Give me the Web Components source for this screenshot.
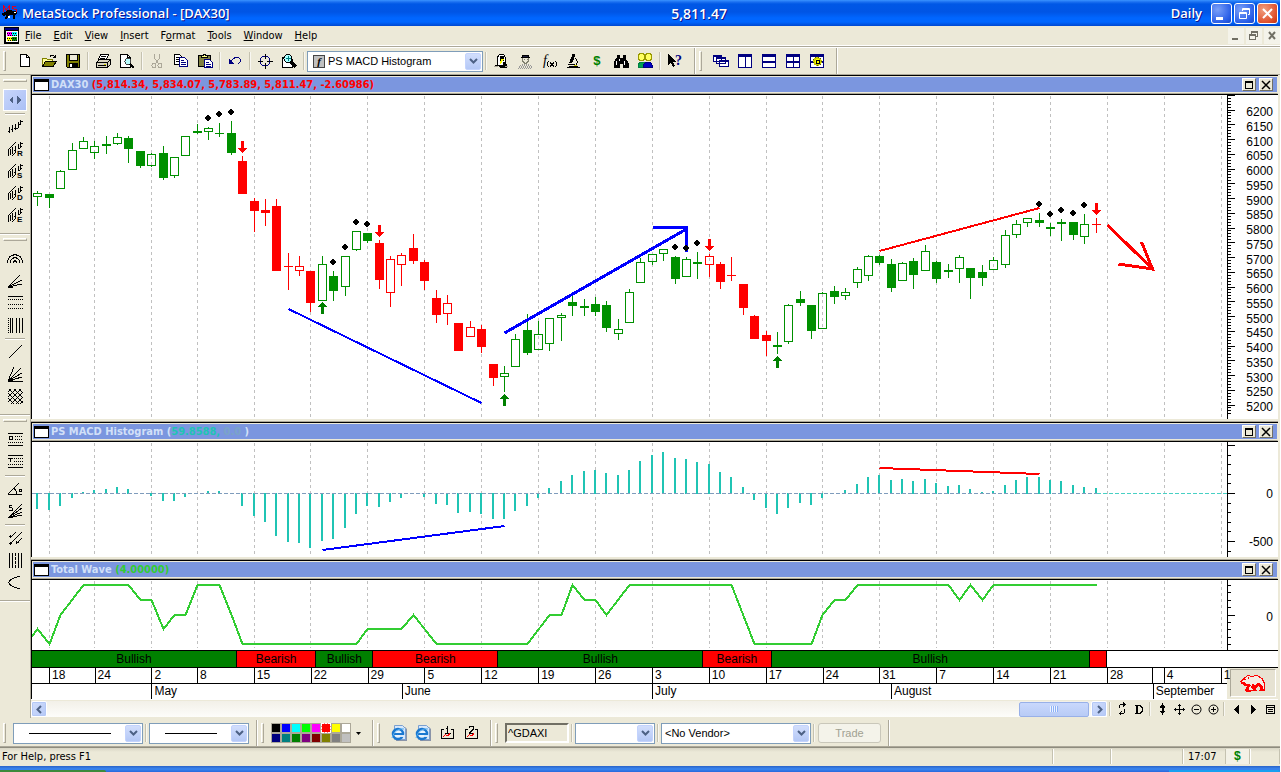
<!DOCTYPE html>
<html lang="en">
<head>
<meta charset="utf-8">
<title>MetaStock Professional - [DAX30]</title>
<style>
  body {
    margin: 0;
    background: #fff;
    font-family: "DejaVu Sans Condensed", "Noto Sans", sans-serif;
    font-size: 11px;
    color: #000;
  }
</style>
</head>
<body>
<ms-app></ms-app>

<script>
// 16x16 icons, drawn on the pixel grid
const bars = '<path d="M2.5 8v6M1 12.5h2M5.5 6v7M4 10.5h1M8.5 5v6M7 9.5h4M11.5 3v6M13.5 1v5M12 5.5h2M14 2.5h2"/>';
const channel = (letter) => `<path d="M1 9 9 1M5 15 15 5M1.5 9v6M3.5 8v6M5.5 6v7M8.5 5v6M7 9.5h4M11.5 3v6M13.5 1v5M14 2.5h2"/>
  <rect x="9" y="8" width="7" height="8" fill="#ece9d8" stroke="none"/>
  <text x="10" y="15" font-family="Liberation Sans, sans-serif" font-size="8" font-weight="bold" fill="#000" stroke="none">${letter}</text>`;

const ICONS = {
  new: '<path fill="#fff" d="M3.5 1.5h6l3 3v9h-9z"/><path d="M9.5 1.5v3h3"/>',
  open: '<path fill="#ff9" stroke="#808000" d="M1.5 13V5.5h4l1 1h5V9"/><path fill="#808000" d="M1.5 13.5 4.5 8.5h11l-3.5 5z"/><path d="M9 3.5c2-2 4-1 5 1M14.5 2v3M12 4.5h2"/>',
  save: '<path fill="#808000" d="M1.5 1.5h13v13h-12l-1-1z"/><path fill="#ece9d8" d="M4.5 1.5h8v6h-8z"/><path fill="#000" d="M4.5 10.5h8v4h-8z"/><path stroke="#fff" stroke-width="2" d="M6 11v3"/>',
  print: '<path fill="#fff" d="M5.5 1.5h8l-2 5h-8z"/><path d="M6 3.5h5M5 5.5h5"/><path fill="#d8d4c0" d="M1.5 9.5l3-3h11v5l-3 3h-11z"/><path d="M1 9.5h11.5v5M12.5 9.5l3-3M3 12.5h8"/><path stroke="#cc0" d="M9 11.5h2"/>',
  preview: '<path fill="#fff" d="M1.5 1.5h7l3 3v10h-10z"/><path d="M8.5 1.5v3h3"/><circle cx="9" cy="8.5" r="3" fill="#bff" stroke="#444"/><path stroke-width="2" d="M11 11l4 4"/>',
  cut: '<g stroke="#aca899"><path d="M5.5 1v4l4 6M10.5 1v4l-4 6"/><circle cx="5" cy="12.5" r="2"/><circle cx="11" cy="12.5" r="2"/></g>',
  copy: '<path fill="#fff" d="M1.5 1.5h5l3 3v7h-8z"/><path d="M3 4.5h3M3 6.5h4M3 8.5h4"/><path fill="#fff" stroke="#000080" d="M6.5 4.5h5l3 3v6h-8z"/><path stroke="#000080" d="M8 7.5h3M8 9.5h5M8 11.5h5"/>',
  paste: '<path fill="#808040" d="M1.5 2.5h12v11h-12z"/><path fill="#ff8" d="M4.5 4.5v-2h1.5l1-1.5h1l1 1.5h1.5v2z"/><path fill="#fff" stroke="#000080" d="M7.5 6.5h5l3 3v5h-8z"/><path stroke="#000080" d="M9 9.5h3M9 11.5h5M9 13.5h5"/>',
  undo: '<path stroke="#000080" d="M3 9l3-3c2-2 7-2 7.5 1 0 2-1 3-2 4"/><path stroke="none" fill="#000080" d="M2 6v5h5z"/>',
  cross: '<circle cx="8" cy="8" r="5" stroke="#000080"/><path d="M8.5 1v5M8.5 10v6M1 8.5h5M10 8.5h6"/>',
  zoomin: '<path fill="#fff" d="M1.5 4.5h8l2 2v8h-10z"/><circle cx="7" cy="5.5" r="4" fill="#aff"/><path stroke-width="3" d="M10 9l5 5"/><path stroke="#008080" d="M5 5.5h5M7.5 3v5"/>',
  lamp: '<path fill="#fff" d="M4.5 13V4l2-2.5h4l2 3v9"/><path fill="#000" d="M7 3h3v4H7zM2 12h3l2 2h6v-3l-2-2h-1v3H7z"/><path stroke="none" fill="#ff0" d="M8 6h3l-3 5H7z"/><path stroke="#aca899" d="M1 13.5h4M12 13.5h3"/>',
  expert: '<path fill="#224" d="M4 4.5h9M5.5 4V2.5h6V4z"/><path stroke="#808070" d="M5.5 5v3l2 2h2l2-2V5M7 6.5h1M10 6.5h1"/><path stroke="#999" stroke-dasharray="1 1" d="M2 13.5h13M3 12.5h11M5 11.5h7M1 15.5h14M2 14.5h13"/>',
  fx: '<text x="2" y="12" font-family="Liberation Serif, serif" font-style="italic" font-size="14" fill="#000" stroke="none">f</text><path d="M7.5 8l-1 2v2l1 2M14.5 8l1 2v2l-1 2M9 9.5l4 4M13 9.5l-4 4"/>',
  scope: '<path fill="#000" d="M8 1l2 1-3 7H5z"/><path d="M10 5c3 2 3 5 0 8M3 11.5h7M2 14.5h13M4 13.5h9"/><path stroke="#cc0" d="M9 12.5h3"/>',
  dollar: '<text x="8" y="12" text-anchor="middle" font-family="Liberation Mono, monospace" font-weight="bold" font-size="13" fill="#008000" stroke="none">$</text>',
  binoc: '<path fill="#000" d="M4 2h2v3h4V2h2v3l3 5v4h-5v-4H6v4H1v-4l3-5z"/><path stroke="#fff" d="M3.5 8v4M11.5 8v4M6.5 6v2"/>',
  people: '<circle cx="4.5" cy="4" r="3.5" fill="#ffff60" stroke="#990"/><circle cx="11.5" cy="4" r="3.5" fill="#ffff60" stroke="#990"/><path stroke="#008040" fill="#00a050" d="M1 14.5v-3l2-2h4v5z"/><path stroke="#000080" fill="#0000c0" d="M6.5 14.5v-3l2-2h5l2 3v2z"/>',
  help: '<path fill="#000" stroke="none" d="M1 1v11l3-2 2 4 2-1-2-4h4z"/><text x="8" y="12" font-family="Liberation Serif, serif" font-weight="bold" font-size="14" fill="#000080" stroke="none">?</text>',
  cascade: '<g stroke="#000080" fill="#fff"><path d="M.5 2.5h8v6h-8zM3.5 4.5h9v6h-9zM6.5 7.5h9v6h-9z"/><path stroke-width="2" d="M1 3h8M4 5h9M7 8h9"/></g>',
  columns: '<g stroke="#000080" fill="#fff"><path d="M1.5 1.5h13v13h-13zM8.5 2v13"/><path stroke-width="2" d="M1 3h14"/></g>',
  rows: '<g stroke="#000080" fill="#fff"><path d="M1.5 1.5h13v13h-13z"/><path stroke-width="2" d="M1 3h14M1 9h14"/></g>',
  tiles: '<g stroke="#000080" fill="#fff"><path d="M1.5 1.5h13v13h-13zM8.5 2v13"/><path stroke-width="2" d="M1 3h14M1 9h14"/></g>',
  gear: '<g stroke="#000080" fill="#fff"><path d="M1.5 1.5h13v13h-13z"/><path stroke-width="2" d="M1 3h14M1 9h14"/></g><circle cx="8.5" cy="8.5" r="3.5" fill="#ff0" stroke="#cc0" stroke-width="2"/><circle cx="8.5" cy="8.5" r="4.5" stroke="#550" stroke-dasharray="1 2"/><rect x="7" y="7" width="3" height="3"/>',

  split: '<path fill="#4d6185" stroke="none" d="M6 4v8L2 8zM10 4v8l4-4z"/>',
  bars,
  channelR: channel('R'),
  channelS: channel('S'),
  channelD: channel('D'),
  channelE: channel('E'),
  arcs: '<path d="M.5 12c0-11 15-11 15 0M3.5 12c0-7 9-7 9 0M6.5 12c0-3 3-3 3 0"/>',
  fan: '<path d="M1 14 13 2M1 14l14-7M1 14l14-3M1 14.5h5"/>',
  fibo: '<path d="M1 1.5h15"/><path stroke-dasharray="1 1" d="M1 4.5h15M1 9.5h15M1 13.5h15"/>',
  cycles: '<path stroke-dasharray="1 1" d="M1.5 1v15"/><path d="M3.5 1v15M5.5 1v15M9.5 1v15M12.5 1v15M15.5 1v15"/>',
  line: '<path d="M2 14 15 1"/>',
  gann: '<path d="M1 15 7 1M1 15 14 2M1 15 15 7M1 15l14-4M1 15.5h15"/><path stroke-width="2" d="M1 14h5"/>',
  grid: '<path d="M1 4l3-3M1 9l8-8M1 14 14 1M4 16 16 4M9 16l7-7M13 16l3-3M12 1l4 4M7 1l9 9M2 1l14 14M1 5l11 11M1 10l6 6"/>',
  quad: '<path d="M1 1.5h15M1 13.5h15"/><path stroke-dasharray="1 1" d="M8 4.5h8M8 7.5h8M1 10.5h15"/><circle cx="4" cy="6" r="2"/>',
  tirone: '<path d="M1 1.5h15M1 13.5h15M1 4.5h5M3.5 4v4"/><path stroke-dasharray="1 1" d="M7 4.5h9M7 7.5h9M1 10.5h15"/>',
  angle: '<path d="M1 13.5h14M1 13 12 2M7 7l2 3v3M12.5 8.500h2v2h-2z"/>',
  speed: '<path d="M1 15 15 1M1 15l14-10M1 15l14-6M1 15l14-3M5 2H2v2l3 1v2H2"/>',
  fork: '<path d="M3 8l6-6M9 8l6-6M3 14l6-6M9 14l6-6M2 6.5h3M2 13.5h3M9 12.5h3M3.5 5v3M3.5 12v3M9.5 11v3"/>',
  raff: '<path d="M2.5 1v15M5.5 1v15M11.5 1v15M14.5 1v15"/><path stroke-dasharray="3 1" d="M8.5 1v15"/>',
  curve: '<path d="M13 2C-2 6-2 11 13 15"/>',

  ie: '<g shape-rendering="auto"><path fill="#8a94a8" stroke="none" d="M5 2h9l2 2v12H5z"/><path fill="#d8e8fa" stroke="#7aa0d0" d="M3.5.5h8l3 3v11h-11z"/><circle cx="7" cy="9" r="5" fill="#e8f4ff" stroke="#1a78d0" stroke-width="2.500"/><path stroke="#1a78d0" stroke-width="2" d="M3 9h9"/><path stroke="#d8e8fa" stroke-width="2" d="M9 11h4"/><path stroke="#58b0f0" d="M1 13C3 6 8 3 13 4"/></g>',
  save1: '<path d="M5 4.5H2.5v9h12v-9H12M7 3.5h1.5M8.5 1v7M6 8.5h6"/><path stroke="#f00" d="M4 12l3-3M7 10.5h2l2-2M4 12l1-1"/>',
  save2: '<path d="M5 4.5H2.5v9h12v-9H12M6 2.5l1-1h3v3L6.5 8M6 8.5h5"/><path stroke="#f00" d="M4 12l3-3M7 10.5h2l2-2M4 12l1-1"/>',
  refresh: '<path d="M5.5 7V4.5l1-1H10M9 1.500l2 2-2 2M10.500 8v3.500l-1 1H6M7.500 10.500l-2 2 2 2"/>',
  daily: '<path d="M4 4.5h5l2 2v4l-2 2H4M6 4v8M5 4v8"/>',
  vfit: '<path fill="#000" d="M8.5 3l2 3h-4zM8.5 13l2-3h-4z"/><path stroke-width="2" d="M8.5 5v6"/>',
  move: '<path d="M8.5 3v11M3 8.5h11M7 4.5h3M7 12.5h3M4.5 7v3M12.5 7v3"/>',
  minus: '<circle cx="8.5" cy="8.5" r="4.5" shape-rendering="auto"/><path d="M6 8.5h5"/>',
  plus: '<circle cx="8.5" cy="8.5" r="4.5" shape-rendering="auto"/><path d="M6 8.5h5M8.5 6v5"/>',
  prev: '<path fill="#000" stroke="none" d="M11 4v9L6 8.5z"/>',
  next: '<path fill="#000" stroke="none" d="M6 4v9l5-4.5z"/>',
  list: '<path d="M4.5 4.5h8v8h-8zM4 6.5h8M6 8.5h5M6 10.5h5"/>'
};

const drawIcon = (name, size = 16) =>
  `<svg width="${size}" height="${size}" viewBox="0 0 16 16" fill="none" stroke="#000" shape-rendering="crispEdges" aria-hidden="true">${ICONS[name]}</svg>`;

class MsTool extends HTMLElement {
  connectedCallback() {
    this.attachShadow({ mode: 'open' });
    this.shadowRoot.innerHTML = `
      <style>
        :host { display: block; flex: none; width: 24px; height: 22px; }
        button {
          display: grid;
          place-items: center;
          width: 100%;
          height: 100%;
          padding: 0;
          border: 0;
          background: none;
        }
        svg { overflow: visible; }
        :host([active]) button {
          border: 1px solid #fff;
          background: linear-gradient(135deg, #c8d6fb, #aabff5);
        }
      </style>
      <button aria-label="${this.getAttribute('icon')}">${drawIcon(this.getAttribute('icon'))}</button>
    `;
  }
}
customElements.define('ms-tool', MsTool);

class MsSeparator extends HTMLElement {
  connectedCallback() {
    this.attachShadow({ mode: 'open' });
    this.shadowRoot.innerHTML = `
      <style>
        :host { display: flex; flex: none; justify-content: center; width: 6px; height: 18px; }
        :host::before { content: ''; width: 1px; background: #c5c2b0; border-right: 1px solid #f8f7f2; }
        :host([horizontal]) { flex-direction: column; width: 20px; height: 5px; }
        :host([horizontal])::before { width: 20px; height: 1px; background: #aca899; border: 0; border-bottom: 1px solid #fff; }
      </style>
    `;
  }
}
customElements.define('ms-separator', MsSeparator);

// A strip of tools with a drag grip at its start
class MsBand extends HTMLElement {
  connectedCallback() {
    this.attachShadow({ mode: 'open' });
    this.shadowRoot.innerHTML = `
      <style>
        :host {
          display: flex;
          align-items: center;
          padding: 0 7px 0 3px;
          border-right: 1px solid #aca899;
          box-shadow: 1px 0 #fff;
          margin-right: 1px;
        }
        .grip {
          align-self: stretch;
          width: 1px;
          margin: 3px 7px 3px 0;
          border: 1px solid;
          border-color: #fff #aca899 #aca899 #fff;
        }
        :host([vertical]) {
          flex-direction: column;
          padding: 4px 0 7px;
          border-right: 0;
          border-bottom: 1px solid #aca899;
          box-shadow: 0 1px #fff;
          margin: 0;
        }
        :host([vertical]) .grip {
          align-self: auto;
          width: 22px;
          height: 1px;
          margin: 0 0 7px;
        }
      </style>
      <span class="grip"></span>
      <slot></slot>
    `;
  }
}
customElements.define('ms-band', MsBand);

class MsCombo extends HTMLElement {
  connectedCallback() {
    const icon = this.hasAttribute('icon') ? '<span class="icon">f</span>' : '';
    this.attachShadow({ mode: 'open' });
    this.shadowRoot.innerHTML = `
      <style>
        :host {
          display: grid;
          align-items: center;
          flex: none;
          box-sizing: border-box;
          height: 21px;
          border: 1px solid #7f9db9;
          background: #fff;
        }
        select, .icon, .arrow, .line { grid-area: 1 / 1; }
        select {
          appearance: none;
          width: 100%;
          height: 19px;
          padding: 0 20px 0 3px;
          border: 0;
          background: none;
          font: 11px "Liberation Sans", sans-serif;
          color: #000;
        }
        :host([icon]) select { padding-left: 20px; }
        .icon {
          width: 10px;
          height: 11px;
          margin-left: 5px;
          border: 1px solid #444;
          background: #c0c0c0;
          font: italic bold 11px/11px "Liberation Serif", serif;
          text-align: center;
        }
        .arrow {
          justify-self: end;
          display: grid;
          place-items: center;
          box-sizing: border-box;
          width: 16px;
          height: 17px;
          margin-right: 1px;
          border-radius: 2px;
          background: linear-gradient(#d2defc, #b4c8f6);
          border: 1px solid #c3d3fd;
        }
        .line { height: 1px; margin: 0 31px 0 15px; background: #000; }
        .weight { margin: 0 28px 0 11px; }
        .icon, .arrow, .line { pointer-events: none; }
      </style>
      <select aria-label="${this.getAttribute('label')}"><option></option></select>
      ${icon}
      ${this.hasAttribute('line') ? '<span class="line"></span>' : ''}
      <span class="arrow"><svg width="9" height="6" fill="none" stroke="#4d6185" stroke-width="2"><path d="M1 1l3.5 3.5L8 1"/></svg></span>
    `;
    this.shadowRoot.querySelector('option').textContent = this.getAttribute('value') || '';
  }
}
customElements.define('ms-combo', MsCombo);

class MsTitlebar extends HTMLElement {
  connectedCallback() {
    this.attachShadow({ mode: 'open' });
    this.shadowRoot.innerHTML = `
      <style>
        :host {
          display: flex;
          align-items: center;
          height: 26px;
          padding: 0 2px;
          background: linear-gradient(#3a94ff 0, #1a6ff0 2px, #0058e6 4px, #0055e5 12px, #0066ff 18px, #0066ff 22px, #0048d0 26px);
          color: #fff;
          font: 600 13px "Open Sans", sans-serif;
          text-shadow: 1px 1px #0f1089;
        }
        .logo { flex: none; margin-right: 4px; }
        .text { flex: 1; display: grid; grid-template-columns: 13fr 10fr auto; align-items: center; }
        .price { font-size: 14px; }
        .buttons { display: flex; gap: 2px; margin-left: 9px; }
        button {
          width: 21px;
          height: 21px;
          padding: 0;
          border: 1px solid #fff;
          border-radius: 3px;
          background: radial-gradient(circle at 30% 30%, #7aa0f8, #2a5fe8 70%, #1a48c8);
        }
        .close { background: radial-gradient(circle at 30% 30%, #f0a080, #e0502c 70%, #c03010); }
        svg { display: block; margin: auto; }
      </style>
      <svg class="logo" width="16" height="17" shape-rendering="crispEdges">
        <path fill="none" stroke="#e00020" d="M1.5 7V1l3 4 3-4v6M14 1.5h-4v2l4 1v2.500h-4"/>
        <path d="M3 7l3-2 7 1 2 2-1 3-1-1v4h-2v-4H7l-2 4H3l1-4-3 1-1-3z"/>
        <path fill="#fff" d="M12 7h2v1h-2zM6 11h2v2H6z"/>
      </svg>
      <span class="text"><span>MetaStock Professional - [DAX30]</span><span class="price">5,811.47</span><span>Daily</span></span>
      <span class="buttons">
        <button aria-label="Minimize"><svg width="19" height="19" fill="none" stroke="#fff" stroke-width="3"><path d="M4 14.5h7"/></svg></button>
        <button aria-label="Restore"><svg width="19" height="19" fill="none" stroke="#fff"><path d="M4.5 8.5h7v6h-7zM4 9.5h8M7.5 7V4.5h7v6H13M7 5.5h8"/></svg></button>
        <button class="close" aria-label="Close"><svg width="19" height="19" fill="none" stroke="#fff" stroke-width="2"><path d="M5 5l9 9M14 5l-9 9"/></svg></button>
      </span>
    `;
  }
}
customElements.define('ms-titlebar', MsTitlebar);

class MsMenubar extends HTMLElement {
  connectedCallback() {
    this.attachShadow({ mode: 'open' });
    this.shadowRoot.innerHTML = `
      <style>
        :host {
          display: flex;
          align-items: center;
          height: 19px;
          padding-left: 4px;
          border-bottom: 1px solid #fff;
          box-shadow: 0 1px #aca899, 0 2px #fff;
          margin-bottom: 2px;
        }
        nav { flex: 1; display: flex; gap: 12px; margin-left: 5px; }
        a { color: #000; text-decoration: none; line-height: 16px; }
        .buttons { display: flex; gap: 2px; }
        button { width: 16px; height: 16px; padding: 0; border: 0; background: #f4f3ea; }
        svg { display: block; }
      </style>
      <svg width="16" height="17" shape-rendering="crispEdges">
        <path d="M0 0h15v17H0z"/><path fill="#000080" d="M1 1h13v2H1z"/><path fill="#fff" d="M2 4h12v11H2z"/>
        <path fill="#f0f" d="M3 5h5v4H3z"/><path fill="#0ff" d="M8 5h5v4H8z"/><path fill="#ff0" d="M3 10h5v4H3z"/><path fill="#080" d="M8 10h5v4H8z"/>
        <path fill="none" stroke="#000" stroke-dasharray="1 1" d="M3 6.5h10M4 8.5h9M3 11.5h10M4 13.5h9"/>
      </svg>
      <nav>
        <a href="#file"><u>F</u>ile</a>
        <a href="#edit"><u>E</u>dit</a>
        <a href="#view"><u>V</u>iew</a>
        <a href="#insert"><u>I</u>nsert</a>
        <a href="#format">F<u>o</u>rmat</a>
        <a href="#tools"><u>T</u>ools</a>
        <a href="#window"><u>W</u>indow</a>
        <a href="#help"><u>H</u>elp</a>
      </nav>
      <span class="buttons">
        <button aria-label="Minimize chart"><svg width="16" height="16"><path stroke="#716f64" stroke-width="2" d="M4 11h6"/></svg></button>
        <button aria-label="Restore chart"><svg width="16" height="16" fill="none" stroke="#716f64" shape-rendering="crispEdges"><path d="M3.5 7.5h6v4h-6zM3 6.5h7M5.5 6V3.5h6v5H10M5 4.5h7"/></svg></button>
        <button aria-label="Close chart"><svg width="16" height="16" fill="none" stroke="#716f64" stroke-width="2"><path d="M5 4l6 7M11 4l-6 7"/></svg></button>
      </span>
    `;
  }
}
customElements.define('ms-menubar', MsMenubar);

class MsToolbar extends HTMLElement {
  connectedCallback() {
    const tools = (names) => names.split(' ').map((n) => n === '|' ? '<ms-separator></ms-separator>' : `<ms-tool icon="${n}"></ms-tool>`).join('');
    this.attachShadow({ mode: 'open' });
    this.shadowRoot.innerHTML = `
      <style>
        :host { display: flex; height: 26px; }
        ms-combo { width: 176px; }
      </style>
      <ms-band>
        ${tools('new open save | print preview | cut copy paste | undo | cross zoomin |')}
        <ms-combo icon value="PS MACD Histogram" label="Indicator"></ms-combo>
        ${tools('| lamp expert fx scope dollar binoc people | help')}
      </ms-band>
      <ms-band>${tools('cascade columns rows tiles gear')}</ms-band>
    `;
  }
}
customElements.define('ms-toolbar', MsToolbar);

class MsSidebar extends HTMLElement {
  connectedCallback() {
    const group = (names) => `<ms-band vertical>${names.split(' ').map((n) => n === '|' ? '<ms-separator horizontal></ms-separator>' : `<ms-tool icon="${n}"${n === 'split' ? ' active' : ''}></ms-tool>`).join('')}</ms-band>`;
    this.attachShadow({ mode: 'open' });
    this.shadowRoot.innerHTML = `
      <style>
        :host { display: block; flex: none; width: 30px; border-right: 1px solid #aca899; background: #ece9d8; }
      </style>
      ${group('split | bars channelR channelS channelD channelE')}
      ${group('arcs fan fibo cycles | line gann grid')}
      ${group('quad tirone | angle speed | fork raff curve')}
    `;
  }
}
customElements.define('ms-sidebar', MsSidebar);

class MsPanel extends HTMLElement {
  connectedCallback() {
    this.attachShadow({ mode: 'open' });
    this.shadowRoot.innerHTML = `
      <style>
        :host {
          display: block;
          border: solid #000;
          border-width: 1px 0 0 1px;
          background: #fff;
        }
        header {
          display: flex;
          align-items: center;
          height: 15px;
          padding: 0 4px 1px 1px;
          border: 1px solid #ece9d8;
          border-bottom-color: #aca899;
          box-shadow: inset 0 -1px #ece9d8;
          background: #7b96df;
          color: #d2e0f8;
          font-weight: bold;
        }
        .content { border-top: 1px solid #000; }
        .sheet { box-sizing: border-box; width: 15px; height: 12px; margin-right: 2px; border: 1px solid #000; border-top-width: 3px; background: #fff; }
        .title { flex: 1; white-space: nowrap; }
        button {
          width: 14px;
          height: 13px;
          margin-left: 3px;
          padding: 0;
          border: 1px solid;
          border-color: #fff #716f64 #716f64 #fff;
          background: #ece9d8;
        }
        svg { display: block; margin: auto; }
      </style>
      <header>
        <span class="sheet"></span>
        <span class="title"><slot name="title"></slot></span>
        <button aria-label="Maximize"><svg width="10" height="10" fill="none" stroke="#000" shape-rendering="crispEdges"><path d="M1.5 1.5h7v7h-7zM1 2.5h8"/></svg></button>
        <button aria-label="Close"><svg width="10" height="10" fill="none" stroke="#000" stroke-width="1.500"><path d="M1 1l8 8M9 1L1 9"/></svg></button>
      </header>
      <div class="content"><slot></slot></div>
    `;
  }
}
customElements.define('ms-panel', MsPanel);

const BARS_SHOWN = 105.03;
const GRID_BARS = [1, 5, 10, 14, 19, 24, 29, 34, 39, 44, 49, 54, 59, 64, 69, 74, 79, 84, 89, 94, 99, 104];
const share = (n) => `width:calc(100% * ${n} / ${BARS_SHOWN})`;

// Shared frame of the three plots: grid on the left, value axis on the right
class ChartBase extends HTMLElement {
  connectedCallback() {
    this.attachShadow({ mode: 'open' });
    this.shadowRoot.innerHTML = `
      <style>
        :host { display: flex; }
        svg { display: block; height: ${this.rows}px; shape-rendering: crispEdges; fill: none; }
        .plot { flex: 1; min-width: 0; }
        .axis { flex: none; width: 51px; }
        text { font: 12px "Liberation Sans", sans-serif; fill: #000; text-anchor: end; }
      </style>
      <svg class="plot"></svg>
      <svg class="axis">${this.axis()}</svg>
    `;
    this.redraw();
    window.addEventListener('resize', () => this.redraw());
  }

  x(i) {
    return Math.floor(5.9 + i * this.pitch) + 0.5;
  }

  redraw() {
    const plot = this.shadowRoot.querySelector('.plot');
    this.pitch = plot.clientWidth / BARS_SHOWN;
    const grid = GRID_BARS.map((i) => `M${this.x(i)} 1V${this.rows - 2}`).join('');
    plot.innerHTML = `<path stroke="#c0c0c0" stroke-dasharray="3 3" d="${grid}"/>${this.draw()}`;
  }

  line(points, color, width) {
    const d = points.map(([i, y]) => `${this.x(i)} ${y}`).join('L');
    return `<path stroke="${color}" stroke-width="${width}" d="M${d}"/>`;
  }

  ticks(list) {
    return `<path stroke="#000" d="M.5 0V${this.rows}${list.map(([y, w]) => `M0 ${Math.floor(y) + 0.5}h${w}`).join('')}"/>`;
  }
}

// high, body top, body bottom, low (plot rows), then colour and fill
const CANDLES = `96 98 102 111 gh,99 99 103 113 gf,75 76 94 94 gh,48 55 75 75 gh,42 46 54 54 gh,46 51 58 64 gh,41 49 51 59 gf,38 42 49 50 gh,
41 43 54 68 gf,56 56 71 73 gf,58 59 71 72 gh,51 58 83 85 gf,62 62 81 83 gh,41 41 61 61 gh,29 36 38 39 gf,32 33 37 45 gh,
28 38 39 42 gf,26 38 58 60 gf,61 66 99 99 rf,103 106 116 137 rf,104 115 118 131 rf,104 111 176 176 rf,158 171 172 195 rf,161 171 176 181 rh,
176 176 208 217 rf,161 169 206 206 gh,176 181 196 206 gf,161 161 192 201 gh,136 136 155 156 gh,138 138 146 148 gf,145 148 185 194 rf,161 164 198 212 rh,
158 160 170 191 rh,139 153 166 169 rf,165 167 186 195 rf,195 203 220 228 rf,200 208 219 230 rh,228 228 256 256 rf,226 232 242 242 rh,230 234 252 258 rf,
269 269 283 291 rf,271 278 282 297 gh,239 244 272 272 gh,219 235 258 260 gf,226 239 255 255 gh,223 223 249 256 gh,218 220 223 246 gh,200 207 211 221 gf,
204 211 213 221 gf,202 209 217 221 gf,206 210 233 237 gf,224 234 239 245 gh,194 197 228 228 gh,163 167 188 188 gh,159 159 167 170 gh,154 154 159 166 gh,
161 162 184 189 gf,162 164 182 182 gh,157 167 169 184 gf,159 161 170 182 rh,167 169 187 194 rf,162 180 181 186 rf,189 189 213 220 rf,220 221 244 244 rf,
236 240 246 261 rf,237 250 252 259 gf,209 210 247 249 gh,196 204 208 211 gf,210 210 236 244 gf,197 198 234 234 gh,191 196 202 209 gf,193 197 201 205 gh,
172 174 188 193 gh,160 161 181 186 gh,160 161 168 170 gf,164 169 193 197 gf,167 168 186 186 gh,163 166 180 194 gf,150 156 176 176 gh,166 167 184 188 gf,
169 175 177 183 gf,160 162 174 188 gh,173 173 183 204 gf,170 177 183 191 gf,162 165 175 175 gh,135 140 170 173 gh,125 129 140 143 gh,123 123 128 132 gh,
118 125 128 132 gf,128 132 134 141 gf,124 127 129 146 gf,127 127 140 145 gf,119 129 142 149 gh,123 129 130 138 rf`.split(',').map((s) => s.trim().split(' '));

const DIAMONDS = [[15, 23], [16, 19], [17, 17], [26, 167], [27, 152], [28, 127], [29, 129], [56, 152], [57, 153], [58, 148], [88, 109], [89, 119], [90, 115], [91, 118], [92, 110]];
const SELLS = [[18, 46], [30, 130], [59, 144], [93, 108]];
const BUYS = [[25, 207], [41, 299], [65, 261]];

class PriceChart extends ChartBase {
  get rows() { return 324; }

  axis() {
    const y = (price) => 15 + (6200 - price) * 0.295;
    const list = [];
    const labels = [];
    for (let price = 6250; price >= 5170; price -= 10) {
      list.push([y(price), price % 50 ? 4 : 8]);
      if (price % 50 === 0 && price <= 6200) labels.push(`<text x="46" y="${Math.round(y(price)) + 6}">${price}</text>`);
    }
    return this.ticks(list) + labels.join('');
  }

  candle([high, top, bottom, low, look], i) {
    const x = this.x(i);
    const color = look[0] === 'g' ? '#009000' : '#f00';
    const body = look[1] === 'f'
      ? `<rect x="${x - 4.5}" y="${top}" width="9" height="${bottom - top}" fill="${color}"/>`
      : `<rect x="${x - 4}" y="${+top + 0.5}" width="8" height="${bottom - top - 1}" stroke="${color}"/>`;
    return `<path stroke="${color}" d="M${x} ${high}V${top}M${x} ${bottom}V${low}"/>${body}`;
  }

  draw() {
    const blue = '#00f';
    const red = '#f00';
    return CANDLES.map((c, i) => this.candle(c, i)).join('')
      + this.line([[22, 214], [39, 308]], blue, 2)
      + this.line([[41, 238], [57, 134]], blue, 3)
      + this.line([[54, 132], [57, 132]], blue, 3)
      + this.line([[57, 131], [57, 157]], blue, 3)
      + this.line([[74, 156], [88, 113]], red, 2)
      + this.line([[94, 130], [98, 174]], red, 3)
      + this.line([[95, 169], [98, 174], [97, 147]], red, 3)
      + DIAMONDS.map(([i, y]) => `<path fill="#000" d="M${this.x(i) - 4.5} ${y}l3.500-3.500 3.500 3.500-3.500 3.500z"/>`).join('')
      + SELLS.map(([i, y]) => `<path fill="${red}" d="M${this.x(i) - 2} ${y}h3v7h3.500l-5 5-5-5h3.500z"/>`).join('')
      + BUYS.map(([i, y]) => `<path fill="#008000" d="M${this.x(i) - 2} ${y + 12}h3v-7h3.500l-5-5-5 5h3.500z"/>`).join('');
  }
}
customElements.define('price-chart', PriceChart);

const MACD = [-16, -17, -13, -5, 2, 4, 5, 7, 5, 0, -3, -8, -8, -4, 1, 3, 3, -1, -13, -23, -29, -43, -49, -50, -55, -48, -46, -35, -21, -13, -14, -9, -5, -1, -4,
  -11, -12, -20, -19, -21, -26, -26, -18, -13, -5, 6, 13, 19, 23, 24, 21, 19, 24, 33, 39, 42, 36, 35, 32, 30, 22, 17, 7, -7, -15, -21, -15, -10, -12, -5,
  0, 4, 10, 17, 19, 14, 15, 13, 15, 11, 8, 9, 5, 2, 3, 9, 14, 17, 17, 14, 13, 9, 7, 6];

class MacdChart extends ChartBase {
  get rows() { return 115; }

  axis() {
    const list = [];
    for (let v = 5; v >= -6; v--) list.push([51.5 - v * 9.6, v % 5 ? 4 : 8]);
    return `${this.ticks(list)}<text x="46" y="56">0</text><text x="46" y="104">-500</text>`;
  }

  draw() {
    const d = MACD.map((v, i) => v ? `M${this.x(i) - 0.5} ${v > 0 ? 52 : 51}v${-v}` : '').join('');
    return `<path stroke="#20c4b4" stroke-width="2" d="${d}"/>
      <path stroke="#7f9cbc" stroke-dasharray="4 2" d="M0 51.5H${this.x(93)}"/>
      <path stroke="#48d0c4" stroke-dasharray="4 2" d="M${this.x(93)} 51.5H9999"/>
      ${this.line([[25, 108], [41, 84]], '#00f', 2)}
      ${this.line([[74, 26], [88, 32]], '#f00', 2)}`;
  }
}
customElements.define('macd-chart', MacdChart);

// [bar, wave value]
const WAVE = [[-1, -4], [0, -2], [1, -4], [2, 0], [4, 4], [8, 4], [9, 2], [10, 2], [11, -2], [12, 0], [13, 0], [14, 4], [16, 4], [17, 0], [18, -4], [28, -4],
  [29, -2], [32, -2], [33, 0], [35, -4], [43, -4], [45, 0], [46, 0], [47, 4], [48, 2], [49, 2], [50, 0], [52, 4], [61, 4], [63, -4], [68, -4], [69, 0],
  [70, 2], [71, 2], [72, 4], [80, 4], [81, 2], [82, 4], [83, 2], [84, 4], [93, 4]];

class WaveChart extends ChartBase {
  get rows() { return 70; }

  axis() {
    const list = [];
    for (let v = 4; v >= -4; v--) list.push([35 - v * 7.4, v ? 4 : 8]);
    return `${this.ticks(list)}<text x="46" y="41">0</text>`;
  }

  draw() {
    return this.line(WAVE.map(([i, v]) => [i, Math.floor(35 - v * 7.4)]), '#32cd32', 2);
  }
}
customElements.define('wave-chart', WaveChart);

class TrendRibbon extends HTMLElement {
  connectedCallback() {
    const spans = [['Bullish', 18], ['Bearish', 7], ['Bullish', 5], ['Bearish', 11], ['Bullish', 18], ['Bearish', 6], ['Bullish', 28], ['', 1.5]];
    this.attachShadow({ mode: 'open' });
    this.shadowRoot.innerHTML = `
      <style>
        :host {
          display: flex;
          height: 16px;
          padding-right: 51px;
          border: solid #000;
          border-width: 1px 0;
          font: 12px/16px "Liberation Sans", sans-serif;
          text-align: center;
        }
        span { flex: none; box-sizing: border-box; border-right: 1px solid #000; background: #f00; }
        .Bullish { background: #008000; }
      </style>
      ${spans.map(([name, n]) => `<span class="${name}" style="${share(n)}">${name}</span>`).join('')}
    `;
  }
}
customElements.define('trend-ribbon', TrendRibbon);

class DateScale extends HTMLElement {
  connectedCallback() {
    const days = [['18', 4], ['24', 5], ['2', 4], ['8', 5], ['15', 5], ['22', 5], ['29', 5], ['5', 5], ['12', 5], ['19', 5], ['26', 5], ['3', 5], ['10', 5],
      ['17', 5], ['24', 5], ['31', 5], ['7', 5], ['14', 5], ['21', 5], ['28', 4], ['', 1], ['4', 5], ['1', 0.5]];
    const months = [['May', 22], ['June', 22], ['July', 21], ['August', 23], ['September', 6.5]];
    const cells = (list) => list.map(([name, n]) => `<span style="${share(n)}">${name}</span>`).join('');
    this.attachShadow({ mode: 'open' });
    this.shadowRoot.innerHTML = `
      <style>
        :host { display: flex; background: #ece9d8; font: 12px/15px "Liberation Sans", sans-serif; }
        .rows { flex: 1; min-width: 0; background: #fff; }
        .row { display: flex; height: 15px; }
        .days { border-bottom: 1px solid #000; }
        span { flex: none; box-sizing: border-box; padding-left: 2px; border-left: 1px solid #000; white-space: nowrap; }
        .lead { padding: 0; border: 0; }
        .bear {
          box-sizing: border-box;
          width: 46px;
          height: 28px;
          margin: 1px 2px 0 3px;
          padding: 0;
          border: 1px solid;
          border-color: #aca899 #fff #fff #aca899;
          background: #e6e2d2;
        }
        svg { display: block; margin: auto; }
      </style>
      <div class="rows">
        <div class="row days"><span class="lead" style="${share(1.5)}"></span>${cells(days)}</div>
        <div class="row"><span class="lead" style="${share(10.5)}"></span>${cells(months)}</div>
      </div>
      <button class="bear" aria-label="Expert">
        <svg width="26" height="20" shape-rendering="crispEdges">
          <path fill="#f4ece4" stroke="#f00" d="M5 4.500l3-2 4 1 5-1 5 3 2 4v8h-4l1-2-2-3-3 1-3 1 2 3h-5l-2-1 1-3-4-1-3-2-1-2 1-1z"/>
          <path fill="#f00" d="M1 9h3l2 2h3l2 2-3 1v3h3v2H6l-1-2 2-4-3-1-3-1zM12 11l3 1 3-2 3 1 2 3 1 4h-4l1-3-3-2-2 2 1 3h-3l-3-3 1-3zM8 4h1v2H8zM4 6h2v1H4z"/>
        </svg>
      </button>
    `;
  }
}
customElements.define('date-scale', DateScale);

class ChartScroller extends HTMLElement {
  connectedCallback() {
    const tool = (n) => `<ms-tool icon="${n}"></ms-tool>`;
    this.attachShadow({ mode: 'open' });
    this.shadowRoot.innerHTML = `
      <style>
        :host { display: flex; align-items: center; height: 18px; background: #ece9d8; border-top: 1px solid #fff; }
        .bar { flex: 1; display: flex; height: 16px; background: linear-gradient(#f2f0e8, #fdfdfa); }
        .bar button {
          width: 16px;
          height: 16px;
          padding: 0;
          border: 1px solid #fff;
          border-radius: 2px;
          box-shadow: inset 0 0 0 1px #b4c8f6;
          background: linear-gradient(135deg, #d2defc, #b4c8f6);
        }
        .bar svg { display: block; margin: auto; }
        input { appearance: none; flex: 1; min-width: 0; height: 16px; margin: 0 2px 0 0; background: none; }
        input::-webkit-slider-thumb {
          appearance: none;
          width: 70px;
          height: 15px;
          border: 1px solid #98b0e8;
          border-radius: 2px;
          background: repeating-linear-gradient(90deg, #eef4fe 0 1px, #8cb0f8 1px 2px) center / 8px 6px no-repeat, linear-gradient(#c9d8fc, #b8cbf6);
        }
        ms-tool { width: 17px; height: 16px; }
        ms-separator { height: 14px; }
      </style>
      <div class="bar">
        <button aria-label="Scroll left"><svg width="9" height="9" fill="none" stroke="#4d6185" stroke-width="2"><path d="M6 1L2.5 4.5 6 8"/></svg></button>
        <input type="range" min="0" max="100" value="100" aria-label="Scroll chart">
        <button aria-label="Scroll right"><svg width="9" height="9" fill="none" stroke="#4d6185" stroke-width="2"><path d="M3 1l3.5 3.5L3 8"/></svg></button>
      </div>
      <ms-separator></ms-separator>${tool('refresh')}${tool('daily')}
      <ms-separator></ms-separator>${tool('vfit')}${tool('move')}${tool('minus')}${tool('plus')}
      <ms-separator></ms-separator>${tool('prev')}${tool('next')}${tool('list')}
    `;
  }
}
customElements.define('chart-scroller', ChartScroller);

class ColorSwatches extends HTMLElement {
  connectedCallback() {
    const colors = ['#000', '#00f', '#0ff', '#0f0', '#f0f', '#f00', '#ff0', '#fff', '#000080', '#008080', '#008000', '#800080', '#800000', '#808000', '#808080', '#c0c0c0'];
    this.attachShadow({ mode: 'open' });
    this.shadowRoot.innerHTML = `
      <style>
        :host { display: flex; align-items: center; }
        .grid { display: grid; grid-template-columns: repeat(8, 10px); }
        .grid button { width: 10px; height: 10px; padding: 0; border: 1px solid #aca899; }
        .grid button.picked { border: 1px dashed #fff; }
        .more { width: 14px; height: 16px; padding: 0; border: 0; background: none; }
        svg { display: block; margin: auto; }
      </style>
      <div class="grid">${colors.map((c) => `<button aria-label="${c}"${c === '#f00' ? ' class="picked"' : ''} style="background:${c}"></button>`).join('')}</div>
      <button class="more" aria-label="More colors"><svg width="5" height="3"><path d="M0 0h5L2.5 3z"/></svg></button>
    `;
  }
}
customElements.define('color-swatches', ColorSwatches);

class MsBottombar extends HTMLElement {
  connectedCallback() {
    this.attachShadow({ mode: 'open' });
    this.shadowRoot.innerHTML = `
      <style>
        :host { display: flex; height: 26px; padding-top: 2px; border-bottom: 1px solid #aca899; background: #ece9d8; }
        .style { width: 130px; }
        .weight { width: 100px; }
        .period { width: 80px; }
        .vendor { width: 150px; }
        input {
          box-sizing: border-box;
          width: 64px;
          height: 20px;
          padding: 0 1px;
          border: 2px solid;
          border-color: #716f64 #fff #fff #716f64;
          background: #ece9d8;
          font: 11px "Liberation Sans", sans-serif;
        }
        button {
          width: 63px;
          height: 20px;
          margin-left: 1px;
          padding: 0;
          border: 1px solid #c9c7ba;
          border-radius: 3px;
          background: #f4f3ea;
          color: #a1a192;
          font: 11px "Liberation Sans", sans-serif;
        }
      </style>
      <ms-band>
        <ms-combo class="style" line label="Line style"></ms-combo>
        <ms-separator></ms-separator>
        <ms-combo class="weight" line label="Line weight"></ms-combo>
      </ms-band>
      <ms-band><color-swatches></color-swatches></ms-band>
      <ms-band>
        <ms-tool icon="ie"></ms-tool><ms-tool icon="ie"></ms-tool><ms-tool icon="save1"></ms-tool><ms-tool icon="save2"></ms-tool>
      </ms-band>
      <ms-band>
        <input value="^GDAXI" aria-label="Symbol">
        <ms-separator></ms-separator>
        <ms-combo class="period" label="Exchange"></ms-combo>
        <ms-separator></ms-separator>
        <ms-combo class="vendor" value="&lt;No Vendor&gt;" label="Vendor"></ms-combo>
        <ms-separator></ms-separator>
        <button disabled>Trade</button>
      </ms-band>
    `;
  }
}
customElements.define('ms-bottombar', MsBottombar);

class MsStatusbar extends HTMLElement {
  connectedCallback() {
    this.attachShadow({ mode: 'open' });
    this.shadowRoot.innerHTML = `
      <style>
        :host {
          display: flex;
          height: 17px;
          padding: 1px 0 0 2px;
          border-top: 1px solid #8e8c7e;
          background: linear-gradient(#d8d5c4, #ece9d8 4px);
        }
        span { box-sizing: border-box; height: 15px; line-height: 15px; border-right: 1px solid #c5c2b0; box-shadow: 1px 0 #fff; }
        .message { flex: 1; }
        .clock { width: 43px; padding-left: 5px; }
        .money { width: 24px; display: grid; place-items: center; background: #f3f1e6; }
      </style>
      <span class="message">For Help, press F1</span>
      <span style="width:58px"></span>
      <span style="width:72px"></span>
      <span class="clock">17:07</span>
      <span class="money">${drawIcon('dollar', 15)}</span>
      <span style="width:30px"></span>
    `;
  }
}
customElements.define('ms-statusbar', MsStatusbar);

class MsTaskbar extends HTMLElement {
  connectedCallback() {
    this.attachShadow({ mode: 'open' });
    this.shadowRoot.innerHTML = `
      <style>
        :host { display: flex; justify-content: space-between; align-items: end; height: 6px; background: linear-gradient(#2a63c8, #3a86f0 3px, #2868dc); }
        i { height: 2px; width: 106px; background: #3c8a3c; border-radius: 0 2px 0 0; }
        .tray { width: 111px; background: #18a0f0; }
      </style>
      <i></i><i class="tray"></i>
    `;
  }
}
customElements.define('ms-taskbar', MsTaskbar);

class MsApp extends HTMLElement {
  connectedCallback() {
    this.attachShadow({ mode: 'open' });
    this.shadowRoot.innerHTML = `
      <style>
        :host { display: block; background: #ece9d8; margin-right: 1px; }
        main { display: flex; border-top: 1px solid #aca899; }
        .charts { flex: 1; min-width: 0; padding-right: 2px; }
        .gap { margin-bottom: 2px; border-bottom: 0; box-shadow: 0 1px #ece9d8; }
        .split { height: 1px; background: #aca899; }
        .red { color: #f00; }
        .teal { color: #20c4b4; }
        .dim { color: #7aa4c8; }
        .green { color: #32cd32; }
      </style>
      <ms-titlebar></ms-titlebar>
      <ms-menubar></ms-menubar>
      <ms-toolbar></ms-toolbar>
      <main>
        <ms-sidebar></ms-sidebar>
        <div class="charts">
          <ms-panel class="gap">
            <span slot="title">DAX30 <span class="red">(5,814.34, 5,834.07, 5,783.89, 5,811.47, -2.60986)</span></span>
            <price-chart></price-chart>
          </ms-panel>
          <div class="split"></div>
          <ms-panel class="gap">
            <span slot="title">PS MACD Histogram (<span class="teal">59.8588,</span> <span class="dim">0.0</span> )</span>
            <macd-chart></macd-chart>
          </ms-panel>
          <div class="split"></div>
          <ms-panel>
            <span slot="title">Total Wave <span class="green">(4.00000)</span></span>
            <wave-chart></wave-chart>
            <trend-ribbon></trend-ribbon>
            <date-scale></date-scale>
          </ms-panel>
          <chart-scroller></chart-scroller>
        </div>
      </main>
      <ms-bottombar></ms-bottombar>
      <ms-statusbar></ms-statusbar>
      <ms-taskbar></ms-taskbar>
    `;
  }
}
customElements.define('ms-app', MsApp);
</script>
</body>
</html>
